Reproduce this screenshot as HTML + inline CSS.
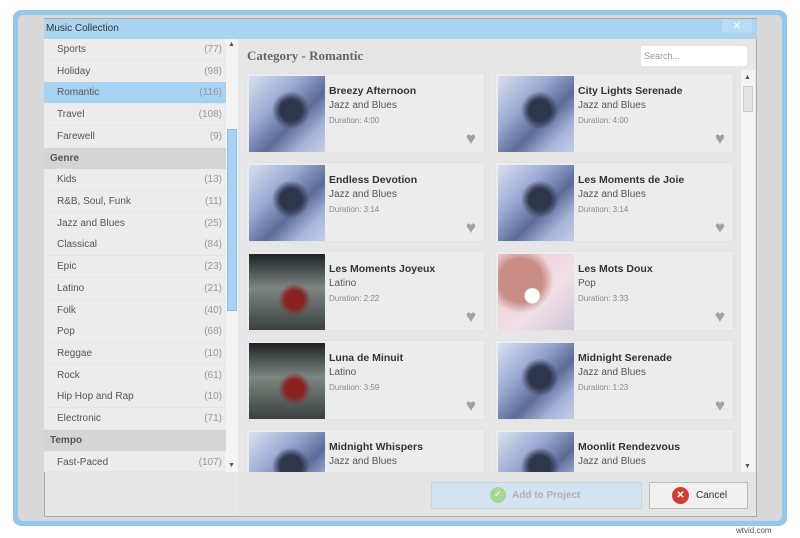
<!DOCTYPE html>
<html><head><style>
*{margin:0;padding:0;box-sizing:border-box}
body{width:800px;height:538px;background:#fff;position:relative;overflow:hidden;font-family:"Liberation Sans",sans-serif}
.a{position:absolute}
.row{position:absolute;left:44px;width:182px;height:21.7px;font-size:10px;color:#555;padding-left:13px;line-height:21px;border-bottom:1px solid #e6e6e6;background:#ececec}
.row span{position:absolute;right:4px;color:#999}
.hdr{background:#d5d5d5;font-weight:bold;color:#555;padding-left:6px}
.card{position:absolute;width:239px;height:80px;background:#ececec;border:1px solid #e2e2e2}
.img{position:absolute;left:2px;top:2px;width:76px;height:76px}
.jz{background:radial-gradient(ellipse at 55% 45%,#2f354a 0 18%,transparent 32%),linear-gradient(135deg,#d8e0f0 0%,#9aa9d2 35%,#5c6a98 60%,#a5b3d8 80%,#c4cfe8 100%)}
.lt{background:radial-gradient(circle at 60% 60%,#8a2222 0 14%,transparent 25%),linear-gradient(180deg,#1e2224,#7d8682 45%,#3b403e)}
.pp{background:radial-gradient(circle at 45% 55%,#fff 0 12%,transparent 14%),radial-gradient(circle at 30% 35%,#c98d86 0 30%,transparent 45%),linear-gradient(135deg,#e8c8cf,#f2dfe6 60%,#cfc6d8)}
.t{position:absolute;left:82px;top:11px;font-size:10.5px;font-weight:bold;color:#333}
.g{position:absolute;left:82px;top:26px;font-size:10px;color:#555}
.d{position:absolute;left:82px;top:42px;font-size:8px;color:#888}
.h{position:absolute;right:8px;bottom:3px;color:#a0a0a0;font-size:17px}
</style></head><body>
<div class="a" style="left:13px;top:10px;width:774px;height:516px;background:#94c7ec;border-radius:8px"></div>
<div class="a" style="left:18px;top:15px;width:764px;height:506px;background:#d8d8d8;border-radius:5px"></div>
<div class="a" style="left:44px;top:18px;width:713px;height:499px;background:#e6e6e6;border:1px solid #aaa"></div>
<div class="a" style="left:44px;top:19px;width:713px;height:20px;background:#a9d4f2;font-size:10px;color:#333;line-height:20px;padding-left:2px">Music Collection</div>
<div class="a" style="left:722px;top:19px;width:30px;height:14px;background:#b8dcf4;color:#fff;font-size:11px;text-align:center;line-height:14px;font-weight:bold">×</div>
<div class="a" style="left:44px;top:39px;width:182px;height:433px;background:#ececec;overflow:hidden">
</div>
<div class="row" style="top:39px">Sports<span>(77)</span></div>
<div class="row" style="top:61px">Holiday<span>(98)</span></div>
<div class="row" style="top:82px;background:#a7d2f3">Romantic<span>(116)</span></div>
<div class="row" style="top:104px">Travel<span>(108)</span></div>
<div class="row" style="top:126px">Farewell<span>(9)</span></div>
<div class="row hdr" style="top:148px">Genre</div>
<div class="row" style="top:169px">Kids<span>(13)</span></div>
<div class="row" style="top:191px">R&amp;B, Soul, Funk<span>(11)</span></div>
<div class="row" style="top:213px">Jazz and Blues<span>(25)</span></div>
<div class="row" style="top:234px">Classical<span>(84)</span></div>
<div class="row" style="top:256px">Epic<span>(23)</span></div>
<div class="row" style="top:278px">Latino<span>(21)</span></div>
<div class="row" style="top:300px">Folk<span>(40)</span></div>
<div class="row" style="top:321px">Pop<span>(68)</span></div>
<div class="row" style="top:343px">Reggae<span>(10)</span></div>
<div class="row" style="top:365px">Rock<span>(61)</span></div>
<div class="row" style="top:386px">Hip Hop and Rap<span>(10)</span></div>
<div class="row" style="top:408px">Electronic<span>(71)</span></div>
<div class="row hdr" style="top:430px">Tempo</div>
<div class="row" style="top:452px;height:20px">Fast-Paced<span>(107)</span></div>
<div class="a" style="left:226px;top:39px;width:12px;height:433px;background:#f4f4f4"></div>
<div class="a" style="left:227px;top:129px;width:10px;height:182px;background:#a7d2f3;border:1px solid #8fbfe4"></div>
<div class="a" style="left:228px;top:41px;font-size:7px;color:#555">▲</div>
<div class="a" style="left:228px;top:462px;font-size:7px;color:#555">▼</div>
<div class="a" style="left:247px;top:48px;font-size:13px;font-weight:bold;color:#666;font-family:'Liberation Serif',serif">Category - Romantic</div>
<div class="a" style="left:641px;top:46px;width:106px;height:20px;background:#fff;font-size:9px;color:#999;line-height:20px;padding-left:3px">Search...</div>
<div class="a" style="left:741px;top:70px;width:14px;height:402px;background:#f4f4f4"></div>
<div class="a" style="left:743px;top:86px;width:10px;height:26px;background:#e4e4e4;border:1px solid #ccc"></div>
<div class="a" style="left:744px;top:74px;font-size:7px;color:#555">▲</div>
<div class="a" style="left:744px;top:463px;font-size:7px;color:#555">▼</div>
<div class="a" style="left:240px;top:70px;width:500px;height:402px;overflow:hidden">
<div class="card" style="left:6px;top:3px"><div class="img jz"></div><div class="t">Breezy Afternoon</div><div class="g">Jazz and Blues</div><div class="d">Duration: 4:00</div><div class="h">♥</div></div>
<div class="card" style="left:255px;top:3px"><div class="img jz"></div><div class="t">City Lights Serenade</div><div class="g">Jazz and Blues</div><div class="d">Duration: 4:00</div><div class="h">♥</div></div>
<div class="card" style="left:6px;top:92px"><div class="img jz"></div><div class="t">Endless Devotion</div><div class="g">Jazz and Blues</div><div class="d">Duration: 3:14</div><div class="h">♥</div></div>
<div class="card" style="left:255px;top:92px"><div class="img jz"></div><div class="t">Les Moments de Joie</div><div class="g">Jazz and Blues</div><div class="d">Duration: 3:14</div><div class="h">♥</div></div>
<div class="card" style="left:6px;top:181px"><div class="img lt"></div><div class="t">Les Moments Joyeux</div><div class="g">Latino</div><div class="d">Duration: 2:22</div><div class="h">♥</div></div>
<div class="card" style="left:255px;top:181px"><div class="img pp"></div><div class="t">Les Mots Doux</div><div class="g">Pop</div><div class="d">Duration: 3:33</div><div class="h">♥</div></div>
<div class="card" style="left:6px;top:270px"><div class="img lt"></div><div class="t">Luna de Minuit</div><div class="g">Latino</div><div class="d">Duration: 3:59</div><div class="h">♥</div></div>
<div class="card" style="left:255px;top:270px"><div class="img jz"></div><div class="t">Midnight Serenade</div><div class="g">Jazz and Blues</div><div class="d">Duration: 1:23</div><div class="h">♥</div></div>
<div class="card" style="left:6px;top:359px"><div class="img jz"></div><div class="t">Midnight Whispers</div><div class="g">Jazz and Blues</div><div class="d">Duration: 3:08</div><div class="h">♥</div></div>
<div class="card" style="left:255px;top:359px"><div class="img jz"></div><div class="t">Moonlit Rendezvous</div><div class="g">Jazz and Blues</div><div class="d">Duration: 3:00</div><div class="h">♥</div></div>
</div>
<div class="a" style="left:238px;top:472px;width:518px;height:44px;background:#e4e4e4"></div>
<div class="a" style="left:431px;top:482px;width:211px;height:27px;background:#d3e4f0;border:1px solid #c3d6e4;font-size:10px;font-weight:bold;color:#a9b3bb;line-height:25px;padding-left:80px">Add to Project</div>
<div class="a" style="left:490px;top:487px;width:16px;height:16px;border-radius:50%;background:#a6d59a;color:#fff;font-size:10px;text-align:center;line-height:16px">✓</div>
<div class="a" style="left:649px;top:482px;width:99px;height:27px;background:#f0f0f0;border:1px solid #bbb;font-size:10px;color:#333;line-height:25px;padding-left:46px">Cancel</div>
<div class="a" style="left:672px;top:487px;width:17px;height:17px;border-radius:50%;background:#d63a35;color:#fff;font-size:10px;text-align:center;line-height:17px;font-weight:bold">✕</div>
<div class="a" style="left:736px;top:526px;font-size:8px;color:#555">wtvid.com</div>
</body></html>
